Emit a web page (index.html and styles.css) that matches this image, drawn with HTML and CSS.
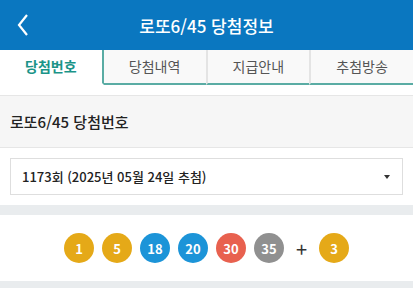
FILE: index.html
```html
<!DOCTYPE html>
<html lang="ko">
<head>
    <meta charset="UTF-8">
    <meta name="viewport" content="width=device-width, initial-scale=1.0">
    <title>로또6/45 당첨정보</title>
    <link rel="stylesheet" href="styles.css">
</head>
<body>
    <header class="top-bar">
        <a class="back-btn" href="#">
            <svg width="14" height="22" viewBox="0 0 14 22">
                <path d="M11 1 L3 11 L11 21" fill="none" stroke="#fff" stroke-width="2.2"/>
            </svg>
        </a>
        <h1>로또6/45 당첨정보</h1>
    </header>

    <nav class="tabs">
        <a class="tab active" href="#">당첨번호</a>
        <a class="tab" href="#">당첨내역</a>
        <a class="tab" href="#">지급안내</a>
        <a class="tab" href="#">추첨방송</a>
    </nav>

    <div class="section-title">
        <h2>로또6/45 당첨번호</h2>
    </div>

    <div class="select-wrap">
        <div class="select-box">
            <span>1173회 (2025년 05월 24일 추첨)</span>
            <span class="caret"></span>
        </div>
    </div>

    <div class="balls">
        <span class="ball yellow">1</span>
        <span class="ball yellow">5</span>
        <span class="ball blue">18</span>
        <span class="ball blue">20</span>
        <span class="ball red">30</span>
        <span class="ball gray">35</span>
        <span class="plus">+</span>
        <span class="ball yellow">3</span>
    </div>
</body>
</html>
```

FILE: styles.css
```css
body {
    font-family: "Noto Sans CJK KR", "Noto Sans", sans-serif;
    margin: 0;
    padding: 0;
    background-color: #e9ecee;
    color: #222;
}

.top-bar {
    position: relative;
    height: 50px;
    background-color: #0a77c0;
    display: flex;
    align-items: center;
    justify-content: center;
}

.top-bar h1 {
    margin: 0;
    color: #fff;
    font-size: 17px;
    font-weight: 500;
}

.back-btn {
    position: absolute;
    left: 16px;
    top: 14px;
}

.tabs {
    display: flex;
    background-color: #fff;
    padding-bottom: 10px;
}

.tab {
    flex: 1;
    height: 33px;
    line-height: 33px;
    text-align: center;
    font-size: 14px;
    color: #555;
    text-decoration: none;
    background-color: #f9f9f9;
    border-left: 2px solid #e4e4e4;
    border-bottom: 2px solid #5aaca4;
}

.tab.active {
    background-color: #fff;
    color: #1b9488;
    font-weight: 700;
    border-left: none;
    border-right: 2px solid #5aaca4;
    border-bottom-color: #fff;
}

.tab.active + .tab {
    border-left: none;
}

.section-title {
    background-color: #f6f6f6;
    border-top: 1px solid #e6e6e6;
    border-bottom: 1px solid #e6e6e6;
    height: 51px;
    display: flex;
    align-items: center;
    padding: 0 10px;
}

.section-title h2 {
    margin: 0;
    font-size: 15px;
    font-weight: 500;
    color: #222;
}

.select-wrap {
    background-color: #fff;
    padding: 10px 10px;
}

.select-box {
    height: 35px;
    border: 1px solid #dedede;
    display: flex;
    align-items: center;
    justify-content: space-between;
    padding: 0 12px 0 11px;
    font-size: 13px;
    font-weight: 500;
}

.caret {
    width: 0;
    height: 0;
    border-left: 3px solid transparent;
    border-right: 3px solid transparent;
    border-top: 4px solid #333;
}

.balls {
    margin-top: 10px;
    height: 66px;
    background-color: #fff;
    display: flex;
    align-items: center;
    justify-content: center;
    gap: 8px;
}

.ball {
    width: 30px;
    height: 30px;
    border-radius: 50%;
    color: #fff;
    font-size: 13px;
    font-weight: 700;
    display: flex;
    align-items: center;
    justify-content: center;
}

.yellow { background-color: #e5a918; }
.blue { background-color: #1c94d8; }
.red { background-color: #e8614f; }
.gray { background-color: #909090; }

.plus {
    width: 19px;
    text-align: center;
    font-size: 20px;
    color: #333;
}
```
